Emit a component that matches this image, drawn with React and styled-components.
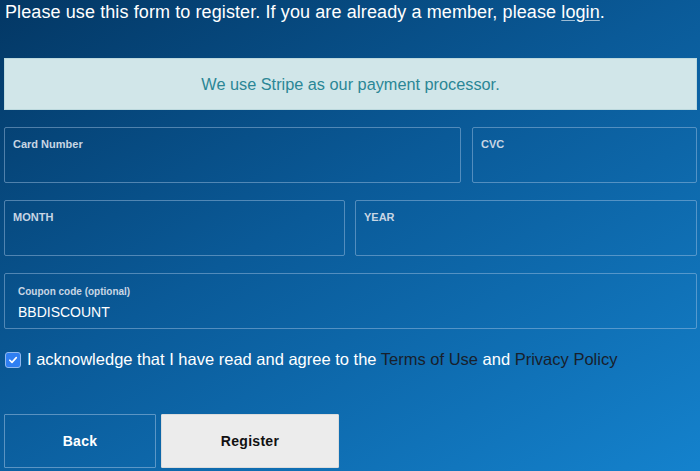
import React, { useState } from 'react';
import styled, { createGlobalStyle } from 'styled-components';

const GlobalStyle = createGlobalStyle`
  html, body {
    margin: 0;
    padding: 0;
    height: 100%;
  }
  body {
    font-family: "Liberation Sans", Arial, Helvetica, sans-serif;
    background: linear-gradient(150deg, #033764 0%, #0a5a98 45%, #1482cd 100%);
    min-height: 471px;
    overflow: hidden;
  }
`;

const Page = styled.div`
  width: 700px;
  height: 471px;
  box-sizing: border-box;
  padding: 0 3px 0 4px;
  color: #fff;
`;

const Intro = styled.p`
  margin: 0;
  padding-left: 1px;
  font-size: 18px;
  letter-spacing: 0.1px;
  line-height: 25px;
  color: #fff;

  a {
    color: #fff;
    text-decoration: underline;
    text-decoration-color: rgba(255, 255, 255, 0.6);
    text-underline-offset: 2px;
  }
`;

const Notice = styled.div`
  margin-top: 33px;
  height: 52px;
  display: flex;
  align-items: center;
  justify-content: center;
  background: #d1e6e9;
  border: 1px solid #bcd9de;
  box-sizing: border-box;
  color: #2b8696;
  font-size: 16.3px;
`;

const Row = styled.div`
  display: grid;
  grid-template-columns: ${(p) => p.cols};
  gap: ${(p) => p.gap || 10}px;
  margin-top: 17px;
`;

const Field = styled.label`
  display: flex;
  flex-direction: column;
  box-sizing: border-box;
  height: 56px;
  padding: ${(p) => (p.wide ? '11px 13px' : '10px 8px')};
  border: 1px solid rgba(170, 200, 230, 0.45);
  border-radius: 2px;
`;

const FieldLabel = styled.span`
  font-size: ${(p) => p.size || 11}px;
  font-weight: bold;
  color: #c8d6e4;
  line-height: 13px;
`;

const FieldInput = styled.input`
  margin-top: 6px;
  padding: 0;
  border: none;
  outline: none;
  background: transparent;
  color: #fff;
  font-family: inherit;
  font-size: 14px;
  line-height: 16px;
`;

const Agree = styled.label`
  display: flex;
  align-items: center;
  gap: 6px;
  margin-top: 21px;
  padding-left: 1px;
  font-size: 16.5px;
  color: #fff;
`;

const Box = styled.span`
  width: 14px;
  height: 14px;
  border-radius: 3px;
  background: #2f7ff2;
  border: 1px solid #8fb8ee;
  display: flex;
  align-items: center;
  justify-content: center;
  flex-shrink: 0;
`;

const DarkLink = styled.a`
  color: #18202c;
  text-decoration: none;
`;

const Actions = styled.div`
  display: flex;
  gap: 5px;
  margin-top: 45px;
`;

const Button = styled.button`
  width: ${(p) => p.w}px;
  height: 54px;
  box-sizing: border-box;
  font-family: inherit;
  font-size: 14px;
  font-weight: bold;
  letter-spacing: 0.3px;
  cursor: pointer;
  border-radius: 1px;
  border: 1px solid ${(p) => (p.primary ? '#dcdcdc' : 'rgba(170, 200, 230, 0.5)')};
  background: ${(p) => (p.primary ? '#ececec' : 'transparent')};
  color: ${(p) => (p.primary ? '#111' : '#fff')};
`;

const App = () => {
  const [coupon, setCoupon] = useState('BBDISCOUNT');

  return (
    <>
      <GlobalStyle />
      <Page>
        <Intro>
          Please use this form to register. If you are already a member, please <a href="#">login</a>.
        </Intro>

        <Notice>We use Stripe as our payment processor.</Notice>

        <Row cols="457px 1fr" gap={11}>
          <Field>
            <FieldLabel>Card Number</FieldLabel>
          </Field>
          <Field>
            <FieldLabel>CVC</FieldLabel>
          </Field>
        </Row>

        <Row cols="341px 1fr" gap={10}>
          <Field>
            <FieldLabel>MONTH</FieldLabel>
          </Field>
          <Field>
            <FieldLabel>YEAR</FieldLabel>
          </Field>
        </Row>

        <Row cols="1fr">
          <Field wide>
            <FieldLabel size={10}>Coupon code (optional)</FieldLabel>
            <FieldInput value={coupon} onChange={(e) => setCoupon(e.target.value)} />
          </Field>
        </Row>

        <Agree>
          <Box>
            <svg width="10" height="10" viewBox="0 0 10 10">
              <path d="M1.8 5.2 L4 7.4 L8.3 2.6" fill="none" stroke="#fff" strokeWidth="1.6" strokeLinecap="round" strokeLinejoin="round" />
            </svg>
          </Box>
          <span>
            I acknowledge that I have read and agree to the <DarkLink href="#">Terms of Use</DarkLink> and{' '}
            <DarkLink href="#">Privacy Policy</DarkLink>
          </span>
        </Agree>

        <Actions>
          <Button w={152}>Back</Button>
          <Button w={178} primary>
            Register
          </Button>
        </Actions>
      </Page>
    </>
  );
};

export default App;
